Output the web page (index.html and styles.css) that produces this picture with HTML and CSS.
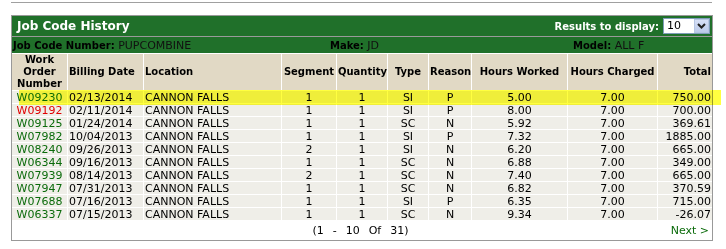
FILE: index.html
```html
<!DOCTYPE html>
<html>
<head>
<meta charset="utf-8">
<link rel="stylesheet" href="styles.css">
</head>
<body>
<div class="rule"></div>
<div class="panel">
  <div class="titlebar">
    <span class="title">Job Code History</span>
    <div class="results">
      <span class="results-label">Results to display:</span>
      <div class="select">
        <span class="select-val">10</span>
        <span class="select-btn"><svg width="9" height="6" viewBox="0 0 9 6"><path d="M1 1 L4.5 4.5 L8 1" fill="none" stroke="#222" stroke-width="2"/></svg></span>
      </div>
    </div>
  </div>
  <div class="subbar">
    <span><b>Job Code Number:</b> PUPCOMBINE</span>
    <span><b>Make:</b> JD</span>
    <span><b>Model:</b> ALL F</span>
  </div>
  <table class="grid">
    <colgroup>
      <col class="c1"><col class="c2"><col class="c3"><col class="c4"><col class="c5">
      <col class="c6"><col class="c7"><col class="c8"><col class="c9"><col class="c10">
    </colgroup>
    <thead>
      <tr>
        <th class="ctr">Work<br>Order<br>Number</th>
        <th class="lft">Billing Date</th>
        <th class="lft">Location</th>
        <th class="ctr">Segment</th>
        <th class="ctr">Quantity</th>
        <th class="ctr">Type</th>
        <th class="ctr">Reason</th>
        <th class="ctr">Hours Worked</th>
        <th class="ctr">Hours Charged</th>
        <th class="rgt">Total</th>
      </tr>
    </thead>
    <tbody>
      <tr><td class="ctr"><a class="wo">W09230</a></td><td>02/13/2014</td><td>CANNON FALLS</td><td class="ctr">1</td><td class="ctr">1</td><td class="ctr">SI</td><td class="ctr">P</td><td class="ctr">5.00</td><td class="ctr">7.00</td><td class="rgt">750.00</td></tr>
      <tr><td class="ctr"><a class="wo red">W09192</a></td><td>02/11/2014</td><td>CANNON FALLS</td><td class="ctr">1</td><td class="ctr">1</td><td class="ctr">SI</td><td class="ctr">P</td><td class="ctr">8.00</td><td class="ctr">7.00</td><td class="rgt">700.00</td></tr>
      <tr><td class="ctr"><a class="wo">W09125</a></td><td>01/24/2014</td><td>CANNON FALLS</td><td class="ctr">1</td><td class="ctr">1</td><td class="ctr">SC</td><td class="ctr">N</td><td class="ctr">5.92</td><td class="ctr">7.00</td><td class="rgt">369.61</td></tr>
      <tr><td class="ctr"><a class="wo">W07982</a></td><td>10/04/2013</td><td>CANNON FALLS</td><td class="ctr">1</td><td class="ctr">1</td><td class="ctr">SI</td><td class="ctr">P</td><td class="ctr">7.32</td><td class="ctr">7.00</td><td class="rgt">1885.00</td></tr>
      <tr><td class="ctr"><a class="wo">W08240</a></td><td>09/26/2013</td><td>CANNON FALLS</td><td class="ctr">2</td><td class="ctr">1</td><td class="ctr">SI</td><td class="ctr">N</td><td class="ctr">6.20</td><td class="ctr">7.00</td><td class="rgt">665.00</td></tr>
      <tr><td class="ctr"><a class="wo">W06344</a></td><td>09/16/2013</td><td>CANNON FALLS</td><td class="ctr">1</td><td class="ctr">1</td><td class="ctr">SC</td><td class="ctr">N</td><td class="ctr">6.88</td><td class="ctr">7.00</td><td class="rgt">349.00</td></tr>
      <tr><td class="ctr"><a class="wo">W07939</a></td><td>08/14/2013</td><td>CANNON FALLS</td><td class="ctr">2</td><td class="ctr">1</td><td class="ctr">SC</td><td class="ctr">N</td><td class="ctr">7.40</td><td class="ctr">7.00</td><td class="rgt">665.00</td></tr>
      <tr><td class="ctr"><a class="wo">W07947</a></td><td>07/31/2013</td><td>CANNON FALLS</td><td class="ctr">1</td><td class="ctr">1</td><td class="ctr">SC</td><td class="ctr">N</td><td class="ctr">6.82</td><td class="ctr">7.00</td><td class="rgt">370.59</td></tr>
      <tr><td class="ctr"><a class="wo">W07688</a></td><td>07/16/2013</td><td>CANNON FALLS</td><td class="ctr">1</td><td class="ctr">1</td><td class="ctr">SI</td><td class="ctr">P</td><td class="ctr">6.35</td><td class="ctr">7.00</td><td class="rgt">715.00</td></tr>
      <tr><td class="ctr"><a class="wo">W06337</a></td><td>07/15/2013</td><td>CANNON FALLS</td><td class="ctr">1</td><td class="ctr">1</td><td class="ctr">SC</td><td class="ctr">N</td><td class="ctr">9.34</td><td class="ctr">7.00</td><td class="rgt">-26.07</td></tr>
    </tbody>
  </table>
  <div class="pager">
    <span></span>
    <span class="count">(1&nbsp; -&nbsp; 10&nbsp; Of&nbsp; 31)</span>
    <a class="next">Next &gt;</a>
  </div>
  <div class="highlight"></div>
</div>
</body>
</html>
```

FILE: styles.css
```css
html, body {
  margin: 0;
  padding: 0;
  background: #fff;
}
body {
  font-family: "DejaVu Sans", Verdana, sans-serif;
  font-size: 11px;
  color: #000;
}
.rule {
  margin: 2px 0 0 11px;
  width: 701px;
  height: 1px;
  background: #a0a0a0;
}
.panel {
  position: relative;
  margin: 12px 0 0 11px;
  width: 700px;
  border: 1px solid #999;
}
.titlebar {
  height: 20px;
  background: #20702a;
  border-bottom: 1px solid #9a9a9a;
  display: flex;
  align-items: center;
  justify-content: space-between;
  padding: 0 2px 0 5px;
}
.title {
  color: #fff;
  font-weight: bold;
  font-size: 12px;
  line-height: 14px;
}
.results {
  display: flex;
  align-items: center;
  gap: 4px;
}
.results-label {
  color: #fff;
  font-weight: bold;
  font-size: 10px;
}
.select {
  width: 45px;
  height: 14px;
  border: 1px solid #7f9db9;
  background: #fff;
  display: flex;
  align-items: center;
  justify-content: space-between;
}
.select-val {
  padding-left: 3px;
  font-size: 11px;
  line-height: 12px;
}
.select-btn {
  width: 15px;
  height: 14px;
  box-sizing: border-box;
  border: 1px solid #b7c6e3;
  background: linear-gradient(#d7e0f6, #bccbea);
  display: flex;
  align-items: center;
  justify-content: center;
}
.subbar {
  height: 16px;
  background: #20702a;
  border-bottom: 1px solid #fff;
  display: grid;
  grid-template-columns: 317px 243px 1fr;
  align-items: center;
  padding-left: 1px;
  color: #111;
  font-size: 11px;
}
.subbar b {
  font-size: 10px;
  color: #000;
}
.grid {
  width: 700px;
  table-layout: fixed;
  border-collapse: separate;
  border-spacing: 0;
}
.c1 { width: 56px; }
.c2 { width: 76px; }
.c3 { width: 138px; }
.c4 { width: 55px; }
.c5 { width: 51px; }
.c6 { width: 41px; }
.c7 { width: 43px; }
.c8 { width: 96px; }
.c9 { width: 90px; }
.c10 { width: 54px; }
.grid th {
  background: #e1d9c5;
  font-size: 10px;
  font-weight: bold;
  line-height: 12px;
  height: 36px;
  padding: 0 1px;
  border-right: 1px solid #fff;
  border-bottom: 1px solid #fff;
  vertical-align: middle;
  white-space: nowrap;
  overflow: hidden;
}
.grid td {
  background: #efeee8;
  line-height: 11px;
  height: 11px;
  padding: 1px 1px 0;
  border-right: 1px solid #fff;
  border-bottom: 1px solid #fff;
  white-space: nowrap;
  overflow: hidden;
  vertical-align: middle;
}
.grid th:last-child, .grid td:last-child {
  border-right: 0;
}
.ctr { text-align: center; }
.lft { text-align: left; }
.rgt { text-align: right; }
.wo {
  color: #0b6b0b;
}
.wo.red {
  color: #e00000;
}
.pager {
  height: 19px;
  display: grid;
  grid-template-columns: 1fr auto 1fr;
  align-items: center;
  padding: 0 3px 0 0;
}
.count {
  text-align: center;
  word-spacing: 1px;
}
.next {
  justify-self: end;
  color: #0b6b0b;
}
.highlight {
  position: absolute;
  left: 7px;
  top: 74px;
  width: 702px;
  height: 15px;
  background: #ffff40;
  mix-blend-mode: multiply;
}
```
